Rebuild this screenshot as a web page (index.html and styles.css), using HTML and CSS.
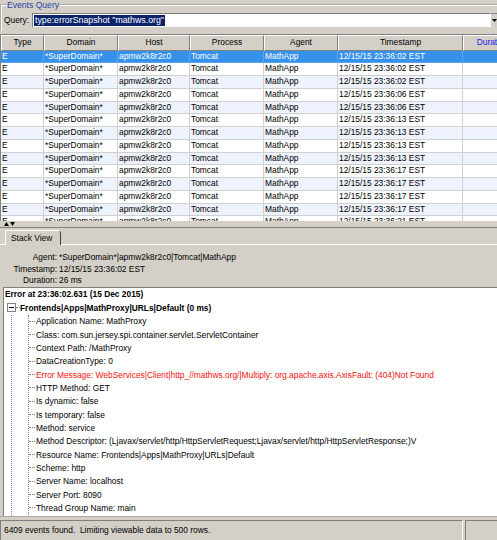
FILE: index.html
```html
<!DOCTYPE html>
<html lang="en">
<head>
    <meta charset="UTF-8">
    <title>Events Query</title>
    <link rel="stylesheet" href="styles.css">
</head>
<body>
<div class="window">
    <!-- Query box -->
    <fieldset class="query-group">
        <legend>Events Query</legend>
        <div class="query-row">
            <label class="query-label">Query:</label>
            <div class="query-field">
                <span class="query-sel">type:errorSnapshot "mathws.org"</span>
            </div>
            <div class="combo-btn">
                <svg width="5" height="3" viewBox="0 0 5 3"><path d="M0 0h5L2.5 3z" fill="#000"/></svg>
            </div>
        </div>
    </fieldset>

    <!-- Events table -->
    <div class="events-table">
        <div class="thead cols">
            <div class="th">Type</div>
            <div class="th">Domain</div>
            <div class="th">Host</div>
            <div class="th">Process</div>
            <div class="th">Agent</div>
            <div class="th">Timestamp</div>
            <div class="th sorted">Duration</div>
        </div>
        <div class="tbody">
            <div class="tr cols selected"><div class="td">E</div><div class="td">*SuperDomain*</div><div class="td">apmw2k8r2c0</div><div class="td">Tomcat</div><div class="td">MathApp</div><div class="td">12/15/15 23:36:02 EST</div><div class="td"></div></div>
            <div class="tr cols"><div class="td">E</div><div class="td">*SuperDomain*</div><div class="td">apmw2k8r2c0</div><div class="td">Tomcat</div><div class="td">MathApp</div><div class="td">12/15/15 23:36:02 EST</div><div class="td"></div></div>
            <div class="tr cols"><div class="td">E</div><div class="td">*SuperDomain*</div><div class="td">apmw2k8r2c0</div><div class="td">Tomcat</div><div class="td">MathApp</div><div class="td">12/15/15 23:36:02 EST</div><div class="td"></div></div>
            <div class="tr cols"><div class="td">E</div><div class="td">*SuperDomain*</div><div class="td">apmw2k8r2c0</div><div class="td">Tomcat</div><div class="td">MathApp</div><div class="td">12/15/15 23:36:06 EST</div><div class="td"></div></div>
            <div class="tr cols"><div class="td">E</div><div class="td">*SuperDomain*</div><div class="td">apmw2k8r2c0</div><div class="td">Tomcat</div><div class="td">MathApp</div><div class="td">12/15/15 23:36:06 EST</div><div class="td"></div></div>
            <div class="tr cols"><div class="td">E</div><div class="td">*SuperDomain*</div><div class="td">apmw2k8r2c0</div><div class="td">Tomcat</div><div class="td">MathApp</div><div class="td">12/15/15 23:36:13 EST</div><div class="td"></div></div>
            <div class="tr cols"><div class="td">E</div><div class="td">*SuperDomain*</div><div class="td">apmw2k8r2c0</div><div class="td">Tomcat</div><div class="td">MathApp</div><div class="td">12/15/15 23:36:13 EST</div><div class="td"></div></div>
            <div class="tr cols"><div class="td">E</div><div class="td">*SuperDomain*</div><div class="td">apmw2k8r2c0</div><div class="td">Tomcat</div><div class="td">MathApp</div><div class="td">12/15/15 23:36:13 EST</div><div class="td"></div></div>
            <div class="tr cols"><div class="td">E</div><div class="td">*SuperDomain*</div><div class="td">apmw2k8r2c0</div><div class="td">Tomcat</div><div class="td">MathApp</div><div class="td">12/15/15 23:36:13 EST</div><div class="td"></div></div>
            <div class="tr cols"><div class="td">E</div><div class="td">*SuperDomain*</div><div class="td">apmw2k8r2c0</div><div class="td">Tomcat</div><div class="td">MathApp</div><div class="td">12/15/15 23:36:17 EST</div><div class="td"></div></div>
            <div class="tr cols"><div class="td">E</div><div class="td">*SuperDomain*</div><div class="td">apmw2k8r2c0</div><div class="td">Tomcat</div><div class="td">MathApp</div><div class="td">12/15/15 23:36:17 EST</div><div class="td"></div></div>
            <div class="tr cols"><div class="td">E</div><div class="td">*SuperDomain*</div><div class="td">apmw2k8r2c0</div><div class="td">Tomcat</div><div class="td">MathApp</div><div class="td">12/15/15 23:36:17 EST</div><div class="td"></div></div>
            <div class="tr cols"><div class="td">E</div><div class="td">*SuperDomain*</div><div class="td">apmw2k8r2c0</div><div class="td">Tomcat</div><div class="td">MathApp</div><div class="td">12/15/15 23:36:17 EST</div><div class="td"></div></div>
            <div class="tr cols"><div class="td">E</div><div class="td">*SuperDomain*</div><div class="td">apmw2k8r2c0</div><div class="td">Tomcat</div><div class="td">MathApp</div><div class="td">12/15/15 23:36:21 EST</div><div class="td"></div></div>
        </div>
    </div>

    <!-- Splitter -->
    <div class="splitter">
        <svg width="5" height="4" viewBox="0 0 5 4"><path d="M2.5 0L5 4H0z" fill="#000"/></svg>
        <svg width="5" height="4" viewBox="0 0 5 4"><path d="M0 0h5L2.5 4z" fill="#000"/></svg>
    </div>

    <!-- Stack view -->
    <div class="bottom">
        <div class="tabs">
            <div class="tab">Stack View</div>
        </div>
        <div class="tab-panel">
            <div class="details">
                <div class="label">Agent:</div><div class="value">*SuperDomain*|apmw2k8r2c0|Tomcat|MathApp</div>
                <div class="label">Timestamp:</div><div class="value">12/15/15 23:36:02 EST</div>
                <div class="label">Duration:</div><div class="value">26 ms</div>
            </div>
            <div class="tree">
                <div class="tree-root">Error at 23:36:02.631 (15 Dec 2015)</div>
                <div class="node">
                    <svg class="expander" width="9" height="9" viewBox="0 0 9 9"><rect x="0.5" y="0.5" width="8" height="8" fill="#fff" stroke="#808080"/><path d="M2 4.5h5" stroke="#000"/></svg>
                    <span class="connector"></span>
                    <span class="node-text">Frontends|Apps|MathProxy|URLs|Default (0 ms)</span>
                </div>
                <div class="branch">
                    <div class="children">
                        <div class="leaf">Application Name: MathProxy</div>
                        <div class="leaf">Class: com.sun.jersey.spi.container.servlet.ServletContainer</div>
                        <div class="leaf">Context Path: /MathProxy</div>
                        <div class="leaf">DataCreationType: 0</div>
                        <div class="leaf error">Error Message: WebServices|Client|http_//mathws.org/|Multiply: org.apache.axis.AxisFault: (404)Not Found</div>
                        <div class="leaf">HTTP Method: GET</div>
                        <div class="leaf">Is dynamic: false</div>
                        <div class="leaf">Is temporary: false</div>
                        <div class="leaf">Method: service</div>
                        <div class="leaf">Method Descriptor: (Ljavax/servlet/http/HttpServletRequest;Ljavax/servlet/http/HttpServletResponse;)V</div>
                        <div class="leaf">Resource Name: Frontends|Apps|MathProxy|URLs|Default</div>
                        <div class="leaf">Scheme: http</div>
                        <div class="leaf">Server Name: localhost</div>
                        <div class="leaf">Server Port: 8090</div>
                        <div class="leaf">Thread Group Name: main</div>
                    </div>
                </div>
            </div>
        </div>
    </div>

    <!-- Status bar -->
    <div class="status">
        <div class="status-msg">6409 events found.  Limiting viewable data to 500 rows.</div>
        <div class="status-extra"></div>
    </div>
</div>
</body>
</html>
```

FILE: styles.css
```css
* {
    box-sizing: border-box;
}

body {
    margin: 0;
    width: 497px;
    height: 540px;
    overflow: hidden;
    background: #d4d0c8;
    font-family: "Liberation Sans", Arial, sans-serif;
    font-size: 8.4px;
    color: #000;
}

.window {
    display: flex;
    flex-direction: column;
    height: 540px;
}

/* Query box */
.query-group {
    margin: 0;
    padding: 0 0 4px 0;
    border: 2px groove #ffffff;
    border-right: none;
    border-bottom: none;
    min-width: 0;
}

.query-group legend {
    margin-left: 4px;
    padding: 0 1px;
    font-size: 8.6px;
    line-height: 10px;
    color: #2546a6;
}

.query-row {
    display: flex;
    align-items: center;
    margin-top: 3px;
    padding-left: 2px;
}

.query-label {
    width: 28px;
}

.query-field {
    flex: 1;
    height: 14px;
    background: #fff;
    border-top: 1px solid #808080;
    border-left: 1px solid #808080;
    display: flex;
    align-items: center;
}

.query-sel {
    margin-left: 1px;
    padding: 0 1px;
    background: #0a246a;
    color: #fff;
    font-size: 8.8px;
    line-height: 11px;
}

.combo-btn {
    width: 7px;
    height: 14px;
    background: #d4d0c8;
    border-top: 1px solid #808080;
    border-left: 1px solid #fff;
    display: flex;
    align-items: center;
    justify-content: flex-end;
}

/* Events table */
.events-table {
    margin-top: 3px;
    height: 187px;
    flex: none;
    border-top: 1px solid #808080;
    border-left: 1px solid #808080;
    overflow: hidden;
}

.cols {
    display: grid;
    grid-template-columns: 43px 74px 72px 74px 74px 125px 59px;
}

.thead {
    height: 15.5px;
}

.th {
    border-top: 1px solid #fff;
    border-left: 1px solid #fff;
    border-right: 1px solid #808080;
    border-bottom: 1px solid #808080;
    text-align: center;
    line-height: 13.5px;
    white-space: nowrap;
    overflow: hidden;
}

.th.sorted {
    color: #1c1cf0;
}

.tbody {
    background: #fff;
}

.tr {
    height: 12.75px;
}

.tr:nth-child(odd) {
    background: #edf2fc;
}

.td {
    border-right: 1px solid #d0d0d0;
    border-bottom: 1px solid #d0d0d0;
    padding-left: 1px;
    line-height: 11.75px;
    white-space: nowrap;
    overflow: hidden;
}

.tr.selected {
    background: #3591ea;
    color: #fff;
}

.tr.selected .td {
    border-color: #5aa5ee;
}

/* Splitter */
.splitter {
    height: 6px;
    flex: none;
    display: flex;
    align-items: center;
    gap: 1px;
    padding-left: 4px;
}

.splitter svg {
    display: block;
}

/* Stack view */
.bottom {
    flex: 1;
    display: flex;
    flex-direction: column;
    border-top: 1px solid #808080;
    min-height: 0;
}

.tabs {
    height: 17px;
    flex: none;
    padding-left: 5px;
    display: flex;
    align-items: flex-end;
    border-bottom: 1px solid #fff;
}

.tab {
    height: 15px;
    margin-bottom: -1px;
    padding: 0 8px 0 5px;
    background: #d4d0c8;
    border-top: 1px solid #fff;
    border-left: 1px solid #fff;
    border-right: 1px solid #404040;
    border-top-right-radius: 4px;
    line-height: 14px;
}

.tab-panel {
    flex: 1;
    display: flex;
    flex-direction: column;
    min-height: 0;
}

.details {
    display: grid;
    grid-template-columns: 53px auto;
    column-gap: 2px;
    padding: 7px 0 0 4px;
    grid-auto-rows: 11.67px;
    line-height: 11.67px;
    white-space: nowrap;
}

.details .label {
    text-align: right;
}

.tree {
    flex: 1;
    margin-left: 3px;
    background: #fff;
    border-top: 1px solid #808080;
    border-left: 1px solid #808080;
    display: flex;
    flex-direction: column;
    overflow: hidden;
    white-space: nowrap;
}

.tree-root {
    height: 13.33px;
    line-height: 13.33px;
    padding-left: 1px;
    font-weight: bold;
}

.node {
    height: 13.33px;
    display: flex;
    align-items: center;
    padding-left: 3px;
    font-weight: bold;
}

.expander {
    display: block;
    flex: none;
}

.connector {
    width: 4px;
    border-top: 1px dotted #808080;
}

.branch {
    flex: 1;
    margin-left: 7px;
    border-left: 1px dotted #808080;
}

.children {
    margin-left: 16px;
    border-left: 1px dotted #808080;
}

.leaf {
    height: 13.33px;
    display: flex;
    align-items: center;
}

.leaf::before {
    content: "";
    width: 6px;
    margin-right: 1px;
    border-top: 1px dotted #808080;
}

.leaf.error {
    color: #f01010;
}

/* Status bar */
.status {
    height: 24px;
    flex: none;
    display: flex;
    gap: 2px;
    padding-top: 3px;
    border-top: 1px solid #a8a8a8;
}

.status-msg {
    width: 463px;
    border-top: 1px solid #808080;
    border-left: 1px solid #808080;
    border-right: 1px solid #fff;
    padding-left: 3px;
    line-height: 18px;
    white-space: pre;
}

.status-extra {
    flex: 1;
    border-top: 1px solid #808080;
    border-left: 1px solid #808080;
}
```
